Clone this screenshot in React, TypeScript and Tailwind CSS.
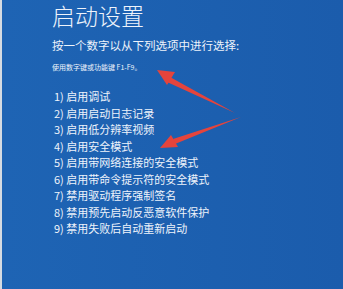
const options = [
  "启用调试",
  "启用启动日志记录",
  "启用低分辨率视频",
  "启用安全模式",
  "启用带网络连接的安全模式",
  "启用带命令提示符的安全模式",
  "禁用驱动程序强制签名",
  "禁用预先启动反恶意软件保护",
  "禁用失败后自动重新启动",
];

function Arrows() {
  return (
    <svg
      className="pointer-events-none absolute inset-0"
      width="343"
      height="289"
      viewBox="0 0 343 289"
    >
      {/* upper arrow */}
      <path d="M233 113 L168 77 L165 82 Z" fill="#e5443c" />
      <path d="M155 70 L173 72 L165 85 Z" fill="#e5443c" />
      {/* lower arrow */}
      <path d="M239 117 L171 139 L173 144 Z" fill="#e5443c" />
      <path d="M158 148 L169 135 L176 147 Z" fill="#e5443c" />
    </svg>
  );
}

export default function App() {
  return (
    <div
      className="relative h-[289px] w-[343px] overflow-hidden border-l-2 border-[#d5dbe2] bg-gradient-to-r from-[#1e64b4] to-[#1b5cac] text-[#eef3fb]"
      style={{ fontFamily: '"Noto Sans CJK SC", "Noto Sans", sans-serif' }}
    >
      <div className="flex flex-col pl-[50px] pt-[2px]">
        <h1 className="text-[23px] font-light leading-[26px]">启动设置</h1>
        <p className="mt-[10px] text-[11.5px] leading-[14px]">
          按一个数字以从下列选项中进行选择:
        </p>
        <p className="mt-[10px] text-[7px] leading-[10px]">使用数字键或功能键 F1-F9。</p>
        <ol className="mt-[16px] flex flex-col pl-[2px]">
          {options.map((o, i) => (
            <li key={o} className="text-[11px] leading-[16.5px]">
              {i + 1}) {o}
            </li>
          ))}
        </ol>
      </div>
      <Arrows />
    </div>
  );
}
